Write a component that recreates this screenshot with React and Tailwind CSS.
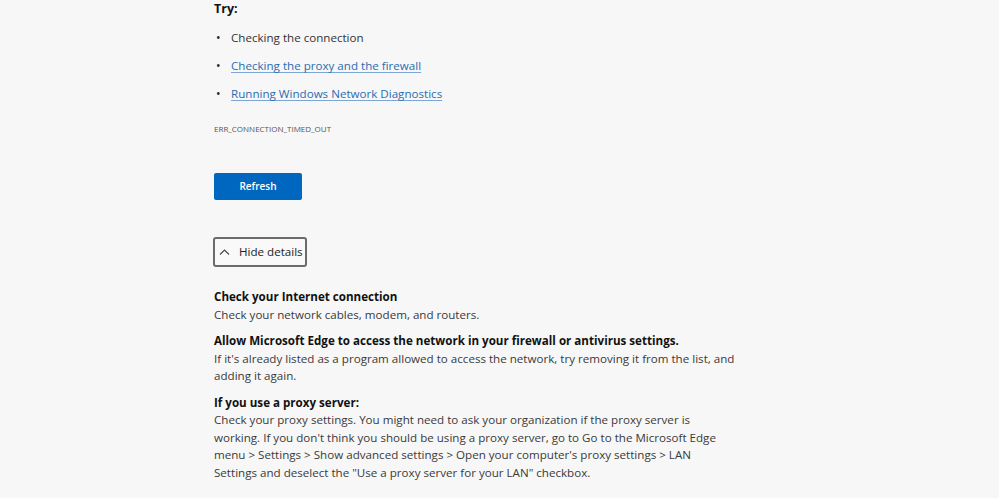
import React from 'react';

const Bullet = ({ children, link }) => (
    <li className="flex items-center h-[28px]">
        <span className="w-[17px] pl-[2px] text-[#222] text-[12px]">•</span>
        {link ? (
            <a href="#" className="text-[#2b6cb0] underline decoration-[#7aa7d6] underline-offset-2">{children}</a>
        ) : (
            <span className="text-[#333]">{children}</span>
        )}
    </li>
);

const App = () => {
    return (
        <div className="min-h-[498px] w-full bg-[#f7f7f7] font-['Open_Sans','Noto_Sans',sans-serif] text-[11.6px]">
            <div className="ml-[214px] w-[521.5px]">
                <h2 className="text-[12.5px] font-bold text-[#111] leading-[17px]">Try:</h2>

                <ul className="mt-[7px]">
                    <Bullet>Checking the connection</Bullet>
                    <Bullet link>Checking the proxy and the firewall</Bullet>
                    <Bullet link>Running Windows Network Diagnostics</Bullet>
                </ul>

                <div className="mt-[15px] text-[8px] text-[#555] leading-[12px]">ERR_CONNECTION_TIMED_OUT</div>

                <button className="mt-[38px] block w-[88px] h-[27px] bg-[#0067c0] rounded-[2px] text-white text-[10px] font-semibold">
                    Refresh
                </button>

                <button className="mt-[37px] -ml-[1px] flex items-center h-[30px] pl-[3px] pr-[2px] border-2 border-[#6b6b6b] rounded-[3px] bg-[#f9f9f9] text-[#222] text-[11.6px]">
                    <svg className="ml-[1px] mr-[9px]" width="11" height="8" viewBox="0 0 11 8" fill="none" stroke="#444" strokeWidth="1.1">
                        <path d="M1 6.5 L5.5 2 L10 6.5" />
                    </svg>
                    Hide details
                </button>

                <div className="mt-[21px] text-[#3a3a3a] leading-[17.5px]">
                    <p className="font-bold text-[#111]">Check your Internet connection</p>
                    <p>Check your network cables, modem, and routers.</p>

                    <p className="font-bold text-[#111] mt-[9px]">Allow Microsoft Edge to access the network in your firewall or antivirus settings.</p>
                    <p>If it's already listed as a program allowed to access the network, try removing it from the list, and adding it again.</p>

                    <p className="font-bold text-[#111] mt-[9px]">If you use a proxy server:</p>
                    <p>Check your proxy settings. You might need to ask your organization if the proxy server is working. If you don't think you should be using a proxy server, go to Go to the Microsoft Edge menu &gt; Settings &gt; Show advanced settings &gt; Open your computer's proxy settings &gt; LAN Settings and deselect the "Use a proxy server for your LAN" checkbox.</p>
                </div>
            </div>
        </div>
    );
};

export default App;
